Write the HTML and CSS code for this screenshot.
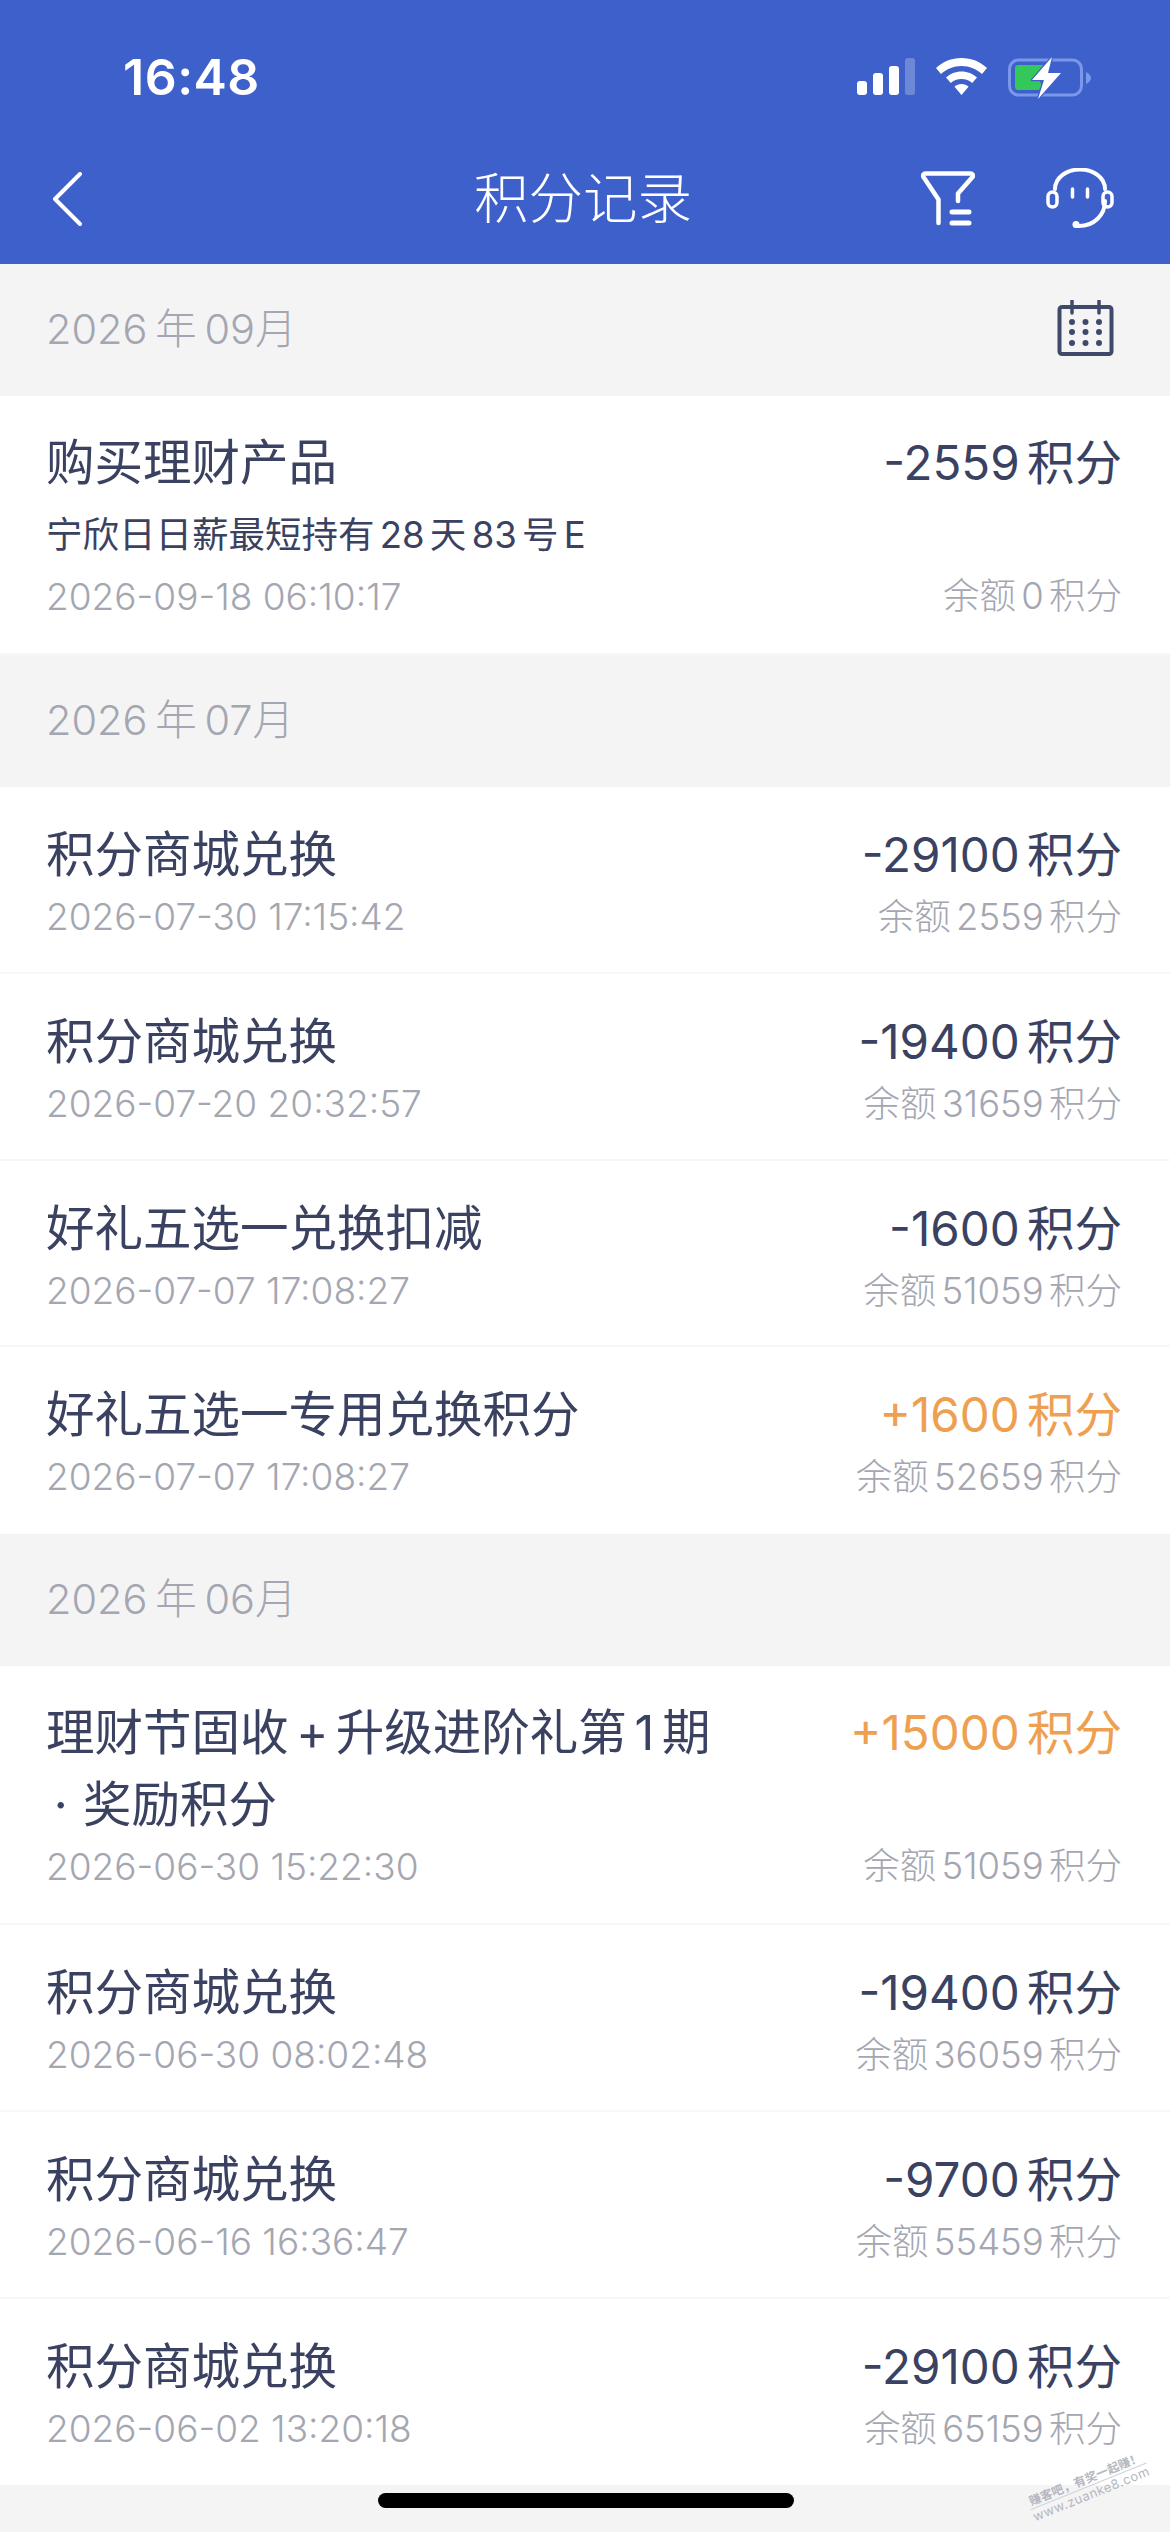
FILE: index.html
```html
<!DOCTYPE html>
<html lang="zh-CN">
<head>
<meta charset="utf-8">
<title>积分记录</title>
<link rel="stylesheet" href="styles.css">
</head>
<body>
<div class="page">
  <header class="top">
    <div class="status">
      <span class="time">16:48</span>
      <div class="status-icons">
        <svg class="signal" width="58" height="37" viewBox="0 0 58 37"><rect x="0" y="23" width="10" height="14" rx="3" fill="#fff"/><rect x="16" y="15" width="10" height="22" rx="3" fill="#fff"/><rect x="32" y="8" width="10" height="29" rx="3" fill="#fff"/><rect x="48" y="0" width="10" height="37" rx="3" fill="#fff" opacity=".25"/></svg>
        <svg class="wifi" width="51" height="37" viewBox="0 0 51 37"><path d="M25.5 0C15.5 0 7 3.5 0 10l5 6C10.500 11 17.500 8 25.500 8S40.500 11 46 16l5-6C44 3.500 35.500 0 25.500 0Z" fill="#fff"/><path d="M25.500 13.500C19.500 13.500 14 15.800 10 19.500l4.800 5.500c2.800-2.500 6.500-4 10.700-4s7.900 1.500 10.700 4L41 19.500c-4-3.700-9.500-6-15.500-6Z" fill="#fff"/><path d="M25.500 26c-2.800 0-5.200 1-7 2.700L25.500 37l7-8.300c-1.800-1.700-4.200-2.700-7-2.700Z" fill="#fff"/></svg>
        <svg class="battery" width="84" height="44" viewBox="0 0 84 44"><rect x="1.500" y="4" width="72" height="35" rx="9" fill="none" stroke="#7b97e8" stroke-width="3"/><path d="M78 16c3 1.500 5 3.500 5 6s-2 4.500-5 6Z" fill="#7b97e8"/><path d="M10 9h26l-6 12 4 9-3 4H10c-2 0-3-1-3-3V12c0-2 1-3 3-3Z" fill="#34c759"/><path d="M44 1 24 24h12l-6 19 23-26H40Z" fill="#fff" stroke="#3e60cb" stroke-width="2.500" stroke-linejoin="round" paint-order="stroke"/></svg>
      </div>
    </div>
    <nav class="nav">
      <svg class="back" width="30" height="54" viewBox="0 0 30 54"><path d="M28 2 3 27l25 25" fill="none" stroke="#fff" stroke-width="4" stroke-linecap="round" stroke-linejoin="round"/></svg>
      <h1 class="nav-title">积分记录</h1>
      <div class="nav-actions">
        <svg width="54" height="58" viewBox="0 0 54 58"><path d="M17.500 55V31.500L2.500 9c-1-1.700 0-3.500 2-3.500h45c2 0 3 1.800 2 3.500L37 25.500V33" fill="none" stroke="#fff" stroke-width="4.500" stroke-linecap="round" stroke-linejoin="round"/><path d="M31 44h17M31 55h17" fill="none" stroke="#fff" stroke-width="5" stroke-linecap="round"/></svg>
        <svg width="68" height="60" viewBox="0 0 68 60"><path d="M9 21C9 10 20 1.500 34 1.500S59 10 59 21M59 33c0 14-11 25-26 25h-3" fill="none" stroke="#fff" stroke-width="4" stroke-linecap="round"/><circle cx="30" cy="56.500" r="3.500" fill="#fff"/><rect x="2" y="24" width="9" height="15" rx="4.500" fill="none" stroke="#fff" stroke-width="3.500"/><rect x="57" y="24" width="9" height="15" rx="4.500" fill="none" stroke="#fff" stroke-width="3.500"/><path d="M26.500 21v8M41.500 21v8" fill="none" stroke="#fff" stroke-width="3.500" stroke-linecap="round"/></svg>
      </div>
    </nav>
  </header>

  <main>
    <div class="month">
      <span>2026 年 09月</span>
      <svg class="calendar" width="57" height="57" viewBox="0 0 57 57"><rect x="2.500" y="7" width="52" height="47" rx="2.500" fill="none" stroke="#3f4a6b" stroke-width="4"/><path d="M15 1v12M42 1v12" stroke="#3f4a6b" stroke-width="3.500" stroke-linecap="round"/><g fill="#3f4a6b"><circle cx="15" cy="22" r="3"/><circle cx="28.500" cy="22" r="3"/><circle cx="42" cy="22" r="3"/><circle cx="15" cy="32" r="3"/><circle cx="28.500" cy="32" r="3"/><circle cx="42" cy="32" r="3"/><circle cx="15" cy="43" r="3"/><circle cx="28.500" cy="43" r="3"/><circle cx="42" cy="43" r="3"/></g></svg>
    </div>
    <div class="row row-tall">
      <div class="left"><div class="name">购买理财产品</div><div class="sub">宁欣日日薪最短持有 28 天 83 号 E</div><div class="date">2026-09-18 06:10:17</div></div>
      <div class="right"><div class="amount">-2559 积分</div><div class="balance">余额 0 积分</div></div>
    </div>

    <div class="month"><span>2026 年 07月</span></div>
    <div class="row">
      <div class="left"><div class="name">积分商城兑换</div><div class="date">2026-07-30 17:15:42</div></div>
      <div class="right"><div class="amount">-29100 积分</div><div class="balance">余额 2559 积分</div></div>
    </div>
    <div class="row">
      <div class="left"><div class="name">积分商城兑换</div><div class="date">2026-07-20 20:32:57</div></div>
      <div class="right"><div class="amount">-19400 积分</div><div class="balance">余额 31659 积分</div></div>
    </div>
    <div class="row">
      <div class="left"><div class="name">好礼五选一兑换扣减</div><div class="date">2026-07-07 17:08:27</div></div>
      <div class="right"><div class="amount">-1600 积分</div><div class="balance">余额 51059 积分</div></div>
    </div>
    <div class="row row-last">
      <div class="left"><div class="name">好礼五选一专用兑换积分</div><div class="date">2026-07-07 17:08:27</div></div>
      <div class="right"><div class="amount plus">+1600 积分</div><div class="balance">余额 52659 积分</div></div>
    </div>

    <div class="month"><span>2026 年 06月</span></div>
    <div class="row row-tall">
      <div class="left"><div class="name">理财节固收 + 升级进阶礼第 1 期<br>&nbsp;·&nbsp; 奖励积分</div><div class="date">2026-06-30 15:22:30</div></div>
      <div class="right"><div class="amount plus">+15000 积分</div><div class="balance">余额 51059 积分</div></div>
    </div>
    <div class="row">
      <div class="left"><div class="name">积分商城兑换</div><div class="date">2026-06-30 08:02:48</div></div>
      <div class="right"><div class="amount">-19400 积分</div><div class="balance">余额 36059 积分</div></div>
    </div>
    <div class="row">
      <div class="left"><div class="name">积分商城兑换</div><div class="date">2026-06-16 16:36:47</div></div>
      <div class="right"><div class="amount">-9700 积分</div><div class="balance">余额 55459 积分</div></div>
    </div>
    <div class="row row-last">
      <div class="left"><div class="name">积分商城兑换</div><div class="date">2026-06-02 13:20:18</div></div>
      <div class="right"><div class="amount">-29100 积分</div><div class="balance">余额 65159 积分</div></div>
    </div>
  </main>
  <div class="home-bar"></div>
  <div class="watermark"><span class="wm-cn">赚客吧，有奖一起赚！</span><span class="wm-en">www.zuanke8.com</span></div>
</div>
</body>
</html>
```
FILE: styles.css
```css
* { box-sizing: border-box; }
html, body { margin: 0; padding: 0; }
body {
  background: #f4f4f5;
  font-family: "Inter", "Noto Sans CJK SC", sans-serif;
  color: #3b4261;
}
.page { position: relative; width: 1170px; height: 2532px; overflow: hidden; }
.top { background: #3e60cb; height: 264px; color: #fff; }
.status {
  height: 132px;
  padding: 55px 78px 0 123px;
  display: flex;
  justify-content: space-between;
  align-items: flex-start;
}
.time { font-size: 50px; line-height: 44px; font-weight: 600; letter-spacing: .5px; }
.status-icons { display: flex; align-items: flex-start; margin-top: 3px; gap: 21px; }
.battery { margin-top: -2px; }
.nav {
  height: 132px;
  padding: 36px 56px 0 52px;
  display: grid;
  grid-template-columns: 1fr auto 1fr;
  align-items: start;
}
.back { margin-top: 4px; }
.nav-title { margin: -6px 0 0; font-size: 54.5px; line-height: 72px; font-weight: 300; color: #fff; }
.nav-actions { justify-self: end; display: flex; gap: 71px; }
.month {
  height: 132px;
  padding: 0 56px 8px 46px;
  display: flex;
  align-items: center;
  justify-content: space-between;
  font-size: 41.500px;
  font-weight: 300;
  color: #a4a6b1;
  word-spacing: -4px;
}
.calendar { margin-top: 5px; }
.row {
  height: 186.750px;
  padding: 32px 48px 31px 46px;
  background: #fff;
  display: flex;
  justify-content: space-between;
  border-bottom: 2px solid #f7f7f9;
}
.row-tall { height: 259px; padding-top: 31px; padding-bottom: 31px; }
.row-last { border-bottom: 0; }
.left { min-width: 0; display: flex; flex-direction: column; }
.right { display: flex; flex-direction: column; justify-content: space-between; align-items: flex-end; white-space: nowrap; }
.name { font-size: 48.500px; line-height: 72px; font-weight: 400; word-spacing: -6px; }
.sub { font-size: 36.500px; line-height: 72px; font-weight: 400; word-spacing: -5px; }
.date { font-size: 37px; line-height: 52px; font-weight: 300; color: #a4a6b1; }
.amount { font-size: 47.500px; line-height: 72px; font-weight: 400; word-spacing: -6px; }
.amount.plus { color: #ee9f50; }
.balance { font-size: 36.500px; line-height: 52px; font-weight: 300; color: #a4a6b1; word-spacing: -5px; }
.home-bar {
  position: absolute;
  left: 378px;
  top: 2493px;
  width: 416px;
  height: 15px;
  border-radius: 8px;
  background: #000;
}
.watermark {
  position: absolute;
  left: 1026px;
  top: 2471px;
  transform: rotate(-22deg);
  display: flex;
  flex-direction: column;
  align-items: center;
  color: #b4b7c0;
  line-height: 15px;
  white-space: nowrap;
}
.wm-cn { font-size: 12px; font-weight: 700; }
.wm-en { font-size: 13px; letter-spacing: .5px; border-top: 1px solid #d0d2d8; }
```
